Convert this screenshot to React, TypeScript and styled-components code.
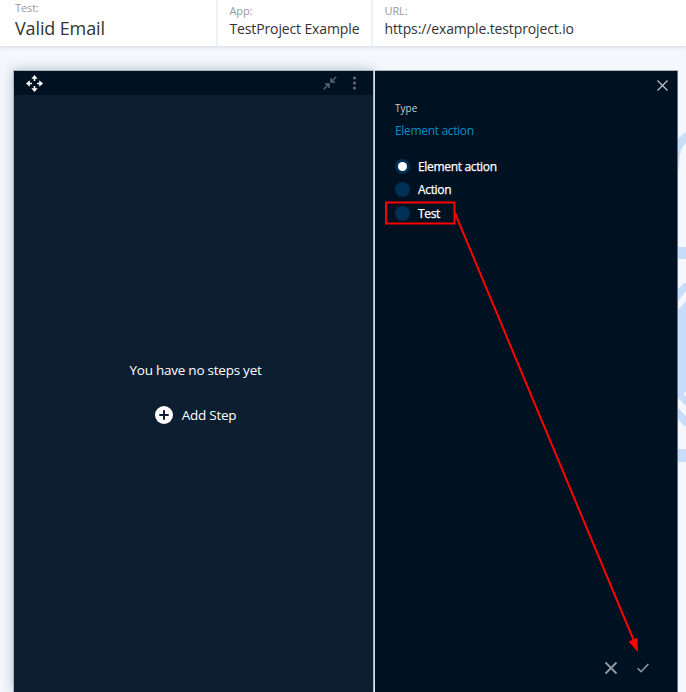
import React from "react";
import styled, { createGlobalStyle } from "styled-components";

const GlobalStyle = createGlobalStyle`
  * { box-sizing: border-box; }
  html, body { margin: 0; overflow: hidden; }
  body { font-family: "Open Sans", "Noto Sans", sans-serif; }
  svg { display: block; flex: none; }
`;

const Page = styled.div`
  position: relative;
  display: flex;
  flex-direction: column;
  width: 686px;
  height: 692px;
  overflow: hidden;
  background: #f4f8fd;
`;

const Header = styled.header`
  display: flex;
  flex: none;
  height: 46px;
  background: #fff;
  box-shadow: 0 1px 4px rgba(30, 50, 70, 0.16);
`;

const Field = styled.div<{ $width?: number; $pad: number; $top: number }>`
  flex: ${(p) => (p.$width ? `0 0 ${p.$width}px` : "1")};
  padding: ${(p) => p.$top}px 0 0 ${(p) => p.$pad}px;
  border-right: ${(p) => (p.$width ? "2px solid #eef2f7" : "0")};
  white-space: nowrap;
`;

const FieldLabel = styled.div`
  height: 14px;
  line-height: 14px;
  font-size: 11px;
  letter-spacing: -0.1px;
  color: #999;
`;

const FieldValue = styled.div<{ $large?: boolean }>`
  line-height: 24px;
  margin-top: ${(p) => (p.$large ? 1 : -1)}px;
  font-size: ${(p) => (p.$large ? 18 : 14)}px;
  letter-spacing: -0.13px;
  color: #333;
`;

const Workspace = styled.main`
  position: relative;
  display: flex;
  flex: 1;
  gap: 2px;
  margin: 25px 8px 0 14px;
`;

const StepsPanel = styled.section`
  display: flex;
  flex-direction: column;
  width: 359px;
  background: #0d1e30;
  box-shadow: 0 0 0 1px #a9b3bf, 0 0 12px rgba(20, 35, 60, 0.32);
`;

const Toolbar = styled.div`
  display: flex;
  align-items: center;
  height: 24px;
  padding: 0 16px 0 12px;
  background: #001122;
`;

const ToolbarActions = styled.div`
  display: flex;
  align-items: center;
  gap: 15px;
  margin-left: auto;
`;

const EmptyState = styled.div`
  display: flex;
  flex-direction: column;
  align-items: center;
  padding-top: 265px;
  padding-left: 4px;
  color: #fff;
  font-size: 13.5px;
  letter-spacing: -0.24px;
  line-height: 20px;
`;

const AddButton = styled.button`
  display: flex;
  align-items: center;
  gap: 9px;
  margin-top: 25px;
  padding: 0;
  border: 0;
  background: none;
  color: #fff;
  font: inherit;
  letter-spacing: -0.25px;
`;

const TypePanel = styled.section`
  display: flex;
  flex-direction: column;
  width: 303px;
  padding: 0 0 0 20px;
  background: #001122;
  border-right: 1px solid #62707f;
  box-shadow: 0 -1px 0 #a9b3bf;
`;

const CloseRow = styled.div`
  display: flex;
  justify-content: flex-end;
  height: 30px;
  padding: 9px 9px 0 0;
`;

const TypeLabel = styled.div`
  color: #c5cbd1;
  font-size: 10px;
  line-height: 14px;
`;

const TypeValue = styled.div`
  margin-top: 8px;
  color: #008fc4;
  font-size: 12px;
  letter-spacing: -0.33px;
  line-height: 16px;
`;

const Options = styled.div`
  display: flex;
  flex-direction: column;
  margin-top: 16px;
`;

const Option = styled.div`
  display: flex;
  align-items: center;
  gap: 8px;
  height: 23.3px;
  color: #fff;
  font-size: 12px;
  letter-spacing: -0.33px;
  -webkit-text-stroke: 0.25px #fff;
`;

const Radio = styled.span<{ $checked?: boolean }>`
  display: flex;
  align-items: center;
  justify-content: center;
  width: 15px;
  height: 15px;
  border-radius: 50%;
  background: #003055;
  &::after {
    content: "";
    width: 9px;
    height: 9px;
    border-radius: 50%;
    background: ${(p) => (p.$checked ? "#fff" : "transparent")};
  }
`;

const Footer = styled.div`
  display: flex;
  align-items: center;
  justify-content: flex-end;
  gap: 19px;
  margin-top: auto;
  padding: 0 28px 17px 0;
`;

const Backdrop = styled.svg`
  position: absolute;
  right: 0;
  top: 120px;
`;

const Annotation = styled.svg`
  position: absolute;
  left: 0;
  top: 0;
  pointer-events: none;
`;

const MoveIcon = () => (
  <svg width="17" height="17" viewBox="0 0 17 17" fill="#fff" stroke="#fff" strokeWidth="1.6">
    <path d="M8.5 6V3M8.5 11v3M6 8.5H3M11 8.5h3" />
    <path stroke="none" d="M8.5 0l3.2 3.8H5.3zM8.5 17l3.2-3.8H5.3zM0 8.5l3.8-3.2v6.4zM17 8.5l-3.8-3.2v6.4z" />
  </svg>
);

const CollapseIcon = () => (
  <svg width="14" height="14" viewBox="0 0 14 14" fill="none" stroke="#59636f" strokeWidth="1.4">
    <path d="M13.3 .7L8 6M8 2v4h4M.7 13.3L6 8M2 8h4v4" />
    <path d="M8 3v3h3zM6 11V8H3z" fill="#59636f" stroke="none" />
  </svg>
);

const App = () => (
  <>
    <GlobalStyle />
    <Page>
      <Backdrop width="8" height="350" viewBox="678 120 8 350" fill="#c7ddfa">
        <path d="M678 139Q681 135 686 132V143Q679 148 679 165L678 173zM678 247h8v12h-8zM678 289l6-6h2v8l-8 10zM678 310l8-9v91a2 2 0 0 0 0 4v10l-8-8zM678 408l8 8v10h-2l-6-7zM678 449h8v13h-8z" />
      </Backdrop>
      <Header>
        <Field $width={218} $pad={15} $top={1}>
          <FieldLabel>Test:</FieldLabel>
          <FieldValue $large>Valid Email</FieldValue>
        </Field>
        <Field $width={155} $pad={11.5} $top={4}>
          <FieldLabel>App:</FieldLabel>
          <FieldValue>TestProject Example</FieldValue>
        </Field>
        <Field $pad={11.5} $top={4}>
          <FieldLabel>URL:</FieldLabel>
          <FieldValue>https://example.testproject.io</FieldValue>
        </Field>
      </Header>
      <Workspace>
        <StepsPanel>
          <Toolbar>
            <MoveIcon />
            <ToolbarActions>
              <CollapseIcon />
              <svg width="5" height="14" viewBox="0 0 5 14" fill="#626b76">
                <circle cx="2.5" cy="2" r="1.6" />
                <circle cx="2.5" cy="7" r="1.6" />
                <circle cx="2.5" cy="12" r="1.6" />
              </svg>
            </ToolbarActions>
          </Toolbar>
          <EmptyState>
            <span>You have no steps yet</span>
            <AddButton>
              <svg width="18" height="18" viewBox="0 0 18 18">
                <circle cx="9" cy="9" r="9" fill="#fff" />
                <path d="M9 4.3v9.4M4.3 9h9.4" stroke="#0d1e30" strokeWidth="2" />
              </svg>
              Add Step
            </AddButton>
          </EmptyState>
        </StepsPanel>
        <TypePanel>
          <CloseRow>
            <svg width="11" height="11" viewBox="0 0 11 11" stroke="#c5cbd1" strokeWidth="1.1">
              <path d="M.5 .5l10 10M10.5 .5l-10 10" />
            </svg>
          </CloseRow>
          <TypeLabel>Type</TypeLabel>
          <TypeValue>Element action</TypeValue>
          <Options>
            <Option><Radio $checked />Element action</Option>
            <Option><Radio />Action</Option>
            <Option><Radio />Test</Option>
          </Options>
          <Footer>
            <svg width="14" height="14" viewBox="0 0 14 14" stroke="#8e99a5" strokeWidth="1.9">
              <path d="M1.5 1.5l11 11M12.5 1.5l-11 11" />
            </svg>
            <svg width="12" height="12" viewBox="0 0 12 12" fill="none" stroke="#8e99a5" strokeWidth="1.6">
              <path d="M.6 6.2l3.5 3.5L11.4 2" />
            </svg>
          </Footer>
        </TypePanel>
      </Workspace>
      <Annotation width="686" height="692" viewBox="0 0 686 692" fill="none" stroke="#ff0000" strokeWidth="2">
        <path d="M386 202.5h68.5v21H386zM454.5 212L634 641" />
        <path d="M638 652l-9.5-10.5 9-3.8z" fill="#ff0000" stroke="none" />
      </Annotation>
    </Page>
  </>
);

export default App;
